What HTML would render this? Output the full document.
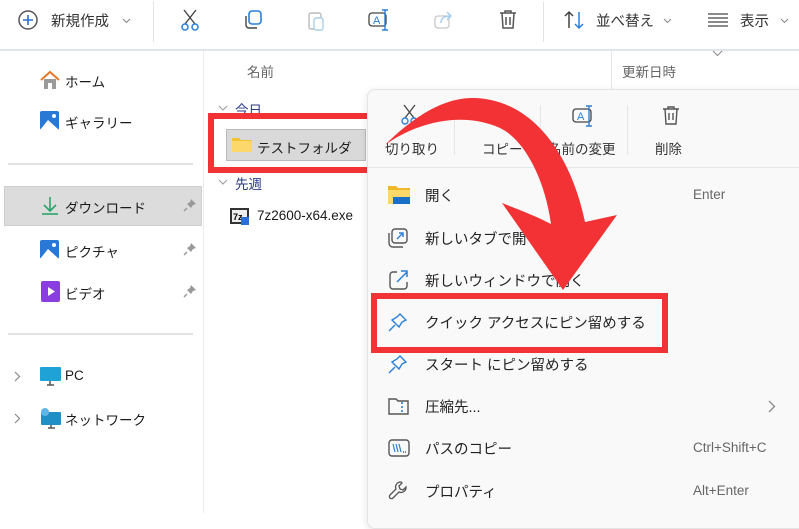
<!DOCTYPE html>
<html><head><meta charset="utf-8"><style>
*{margin:0;padding:0;box-sizing:border-box}
body{width:799px;height:513px;overflow:hidden;background:#fff;font-family:"Liberation Sans","Noto Sans CJK JP",sans-serif;color:#1a1a1a;position:relative}
.a{position:absolute;white-space:nowrap}
.t{font-size:13.5px}
.m{font-size:14.5px;color:#222}
.s{font-size:13.5px;color:#666}
</style></head><body>
<!-- toolbar -->
<div class="a" style="left:0;top:49px;width:799px;height:2px;background:#dde6ee"></div>
<div class="a" style="left:153px;top:2px;width:1px;height:40px;background:#e3e3e3"></div>
<div class="a" style="left:543px;top:2px;width:1px;height:40px;background:#e3e3e3"></div>
<svg class="a" style="left:17px;top:9px" width="22" height="22"><circle cx="11" cy="11" r="9" fill="none" stroke="#555" stroke-width="1.5"/><path d="M11 6v10M6 11h10" stroke="#2a6fd6" stroke-width="1.6"/></svg>
<div class="a" style="left:51px;top:10px;font-size:14.5px;color:#333">新規作成</div>
<svg class="a" style="left:122px;top:18px" width="9" height="6"><path d="M1 1l3.5 3.5L8 1" fill="none" stroke="#888" stroke-width="1"/></svg>
<svg class="a" style="left:178px;top:8px" width="24" height="24"><path d="M6 2l11 14M18 2L7 16" stroke="#444" stroke-width="1.4" fill="none"/><circle cx="7" cy="19" r="3" fill="none" stroke="#2a7fd6" stroke-width="1.5"/><circle cx="17" cy="19" r="3" fill="none" stroke="#2a7fd6" stroke-width="1.5"/></svg>
<svg class="a" style="left:242px;top:9px" width="22" height="22"><rect x="7" y="2" width="12" height="13" rx="3" fill="none" stroke="#2a7fd6" stroke-width="1.6"/><path d="M4 7v9a3 3 0 0 0 3 3h8" fill="none" stroke="#444" stroke-width="1.4"/></svg>
<svg class="a" style="left:305px;top:9px" width="22" height="24"><rect x="4" y="4" width="12" height="16" rx="2" fill="none" stroke="#bbb" stroke-width="1.4"/><rect x="9" y="9" width="9" height="12" rx="2" fill="#fff" stroke="#a8cdee" stroke-width="1.4"/></svg>
<svg class="a" style="left:367px;top:8px" width="24" height="24"><rect x="2" y="5" width="17" height="13" rx="3" fill="none" stroke="#444" stroke-width="1.3"/><text x="6" y="16" font-size="11" fill="#2a7fd6" font-family="Liberation Sans">A</text><path d="M18 2v20M15 2h6M15 22h6" stroke="#2a7fd6" stroke-width="1.4"/></svg>
<svg class="a" style="left:433px;top:9px" width="22" height="22"><rect x="2" y="7" width="14" height="12" rx="3" fill="none" stroke="#c8c8c8" stroke-width="1.3"/><path d="M8 14c0-5 4-7 9-7M14 3l4 4-4 4" fill="none" stroke="#a8cdee" stroke-width="1.5"/></svg>
<svg class="a" style="left:497px;top:8px" width="22" height="24"><path d="M3 5h16M8 5V3h6v2M5 5l1 15h10l1-15M9 9v8M13 9v8" fill="none" stroke="#555" stroke-width="1.5"/></svg>
<svg class="a" style="left:563px;top:10px" width="24" height="20"><path d="M6 18V2M2 6l4-4 4 4" fill="none" stroke="#444" stroke-width="1.5"/><path d="M16 2v16M12 14l4 4 4-4" fill="none" stroke="#2a7fd6" stroke-width="1.5"/></svg>
<div class="a" style="left:596px;top:10px;font-size:14.5px;color:#333">並べ替え</div>
<svg class="a" style="left:663px;top:18px" width="9" height="6"><path d="M1 1l3.5 3.5L8 1" fill="none" stroke="#888" stroke-width="1"/></svg>
<svg class="a" style="left:707px;top:11px" width="22" height="18"><path d="M1 3h20M1 7h20M1 11h20M1 15h20" stroke="#444" stroke-width="1.3"/></svg>
<div class="a" style="left:740px;top:10px;font-size:14.5px;color:#333">表示</div>
<svg class="a" style="left:780px;top:18px" width="9" height="6"><path d="M1 1l3.5 3.5L8 1" fill="none" stroke="#888" stroke-width="1"/></svg>
<!-- sidebar -->
<div class="a" style="left:203px;top:51px;width:1px;height:462px;background:#ececec"></div>
<svg class="a" style="left:39px;top:70px" width="22" height="20"><path d="M2 10L11 2l9 8" fill="none" stroke="#e8782a" stroke-width="2"/><path d="M5 9v10h12V9" fill="#9a9a9a"/><rect x="9" y="13" width="4" height="6" fill="#fff"/></svg>
<div class="a t" style="left:65px;top:71px">ホーム</div>
<svg class="a" style="left:40px;top:111px" width="20" height="20"><rect x="0" y="0" width="19" height="19" rx="2" fill="#2a78d6"/><path d="M0 19L8 9l11 10z" fill="#fff"/><circle cx="14" cy="5" r="2" fill="#fff"/></svg>
<div class="a t" style="left:65px;top:112px">ギャラリー</div>
<div class="a" style="left:8px;top:163px;width:185px;height:2px;background:#e2e2e2"></div>
<div class="a" style="left:4px;top:186px;width:198px;height:40px;background:#dcdcdc;border:1px solid #cfcfcf"></div>
<svg class="a" style="left:41px;top:196px" width="18" height="20"><path d="M9 1v13M3 9l6 6 6-6" fill="none" stroke="#2aa56a" stroke-width="1.6"/><path d="M1 18h16" stroke="#2aa56a" stroke-width="1.6"/></svg>
<div class="a t" style="left:65px;top:197px">ダウンロード</div>
<svg class="a" style="left:183px;top:198px" width="14" height="14"><path d="M8 1l5 5-3 1-2 3-4-4 3-2z" fill="#999"/><path d="M4 10l-3 3" stroke="#999" stroke-width="1.5"/></svg>
<svg class="a" style="left:40px;top:240px" width="20" height="20"><rect x="0" y="0" width="19" height="19" rx="2" fill="#2a78d6"/><path d="M0 19L8 9l11 10z" fill="#fff"/><circle cx="14" cy="5" r="2" fill="#fff"/></svg>
<div class="a t" style="left:65px;top:241px">ピクチャ</div>
<svg class="a" style="left:183px;top:242px" width="14" height="14"><path d="M8 1l5 5-3 1-2 3-4-4 3-2z" fill="#999"/><path d="M4 10l-3 3" stroke="#999" stroke-width="1.5"/></svg>
<svg class="a" style="left:41px;top:281px" width="19" height="21"><rect x="0" y="0" width="19" height="21" rx="2" fill="#8b3ee0"/><path d="M7 6l7 4.5L7 15z" fill="#fff"/></svg>
<div class="a t" style="left:65px;top:283px">ビデオ</div>
<svg class="a" style="left:183px;top:284px" width="14" height="14"><path d="M8 1l5 5-3 1-2 3-4-4 3-2z" fill="#999"/><path d="M4 10l-3 3" stroke="#999" stroke-width="1.5"/></svg>
<div class="a" style="left:8px;top:333px;width:185px;height:2px;background:#e2e2e2"></div>
<svg class="a" style="left:14px;top:371px" width="7" height="11"><path d="M1 1l4.5 4.5L1 10" fill="none" stroke="#888" stroke-width="1.2"/></svg>
<svg class="a" style="left:40px;top:367px" width="21" height="19"><rect x="0" y="0" width="21" height="14" rx="1" fill="#1fa3d6"/><path d="M7 18h7M10 14v4" stroke="#555" stroke-width="1.5"/></svg>
<div class="a t" style="left:65px;top:368px">PC</div>
<svg class="a" style="left:14px;top:413px" width="7" height="11"><path d="M1 1l4.5 4.5L1 10" fill="none" stroke="#888" stroke-width="1.2"/></svg>
<svg class="a" style="left:39px;top:407px" width="23" height="22"><rect x="2" y="5" width="20" height="13" rx="1" fill="#1f8fc6"/><circle cx="6" cy="5" r="4" fill="#5fb7e6"/><path d="M9 21h7M12 18v3" stroke="#555" stroke-width="1.5"/></svg>
<div class="a t" style="left:65px;top:409px">ネットワーク</div>
<!-- main list -->
<div class="a t" style="left:247px;top:61px;color:#666">名前</div>
<div class="a" style="left:611px;top:51px;width:1px;height:38px;background:#e6e6e6"></div>
<div class="a t" style="left:622px;top:61px;color:#666">更新日時</div>
<svg class="a" style="left:712px;top:50px" width="11" height="7"><path d="M1 1l4.5 4.5L10 1" fill="none" stroke="#888" stroke-width="1"/></svg>
<svg class="a" style="left:218px;top:105px" width="10" height="7"><path d="M1 1l4 4 4-4" fill="none" stroke="#999" stroke-width="1"/></svg>
<div class="a t" style="left:235px;top:99px;color:#2a3a8a">今日</div>
<div class="a" style="left:226px;top:129px;width:140px;height:32px;background:#d9d9d9;border:1px solid #bbb"></div>
<svg class="a" style="left:232px;top:136px" width="20" height="16"><path d="M0 2h7l2 2h11v12H0z" fill="#f1c232"/><rect x="0" y="5" width="20" height="11" fill="#fcd86a"/></svg>
<div class="a t" style="left:257px;top:137px">テストフォルダ</div>
<div class="a" style="left:208px;top:113px;width:168px;height:60px;border:6px solid #f23234"></div>
<svg class="a" style="left:218px;top:179px" width="10" height="7"><path d="M1 1l4 4 4-4" fill="none" stroke="#999" stroke-width="1"/></svg>
<div class="a t" style="left:235px;top:173px;color:#2a3a8a">先週</div>
<svg class="a" style="left:230px;top:208px" width="20" height="17"><rect x="0" y="0" width="19" height="16" fill="#333"/><rect x="2" y="2" width="15" height="12" fill="#eee"/><text x="3" y="12" font-size="9" fill="#000" font-family="Liberation Sans" font-weight="bold">7z</text><rect x="11" y="9" width="8" height="8" fill="#2a6fd6"/></svg>
<div class="a t" style="left:257px;top:208px">7z2600-x64.exe</div>
<!-- context menu -->
<div class="a" style="left:367px;top:89px;width:450px;height:440px;background:#f9f9f9;border:1px solid #e4e4e4;border-radius:8px;box-shadow:0 2px 8px rgba(0,0,0,.1)"></div>
<div class="a" style="left:368px;top:167px;width:440px;height:1px;background:#e6e6e6"></div>
<div class="a" style="left:454px;top:105px;width:1px;height:50px;background:#e6e6e6"></div>
<div class="a" style="left:627px;top:105px;width:1px;height:50px;background:#e6e6e6"></div>
<div class="a" style="left:540px;top:105px;width:1px;height:50px;background:#e6e6e6"></div>
<svg class="a" style="left:399px;top:104px" width="22" height="22"><path d="M5 1l10 13M16 1L6 14" stroke="#444" stroke-width="1.3" fill="none"/><circle cx="6" cy="17" r="3" fill="none" stroke="#2a7fd6" stroke-width="1.4"/><circle cx="15" cy="17" r="3" fill="none" stroke="#2a7fd6" stroke-width="1.4"/></svg>
<div class="a t" style="left:385px;top:138px;color:#333">切り取り</div>
<div class="a t" style="left:482px;top:138px;color:#333">コピー</div>
<svg class="a" style="left:572px;top:105px" width="24" height="22"><rect x="1" y="4" width="18" height="13" rx="3" fill="none" stroke="#444" stroke-width="1.3"/><text x="5" y="15" font-size="11" fill="#2a7fd6" font-family="Liberation Sans">A</text><path d="M17 1v20M14 1h6M14 21h6" stroke="#2a7fd6" stroke-width="1.4"/></svg>
<div class="a t" style="left:548px;top:138px;color:#333">名前の変更</div>
<svg class="a" style="left:661px;top:105px" width="22" height="22"><path d="M2 4h16M7 4V2h6v2M4 4l1 15h10l1-15M8 8v7M12 8v7" fill="none" stroke="#555" stroke-width="1.4"/></svg>
<div class="a t" style="left:655px;top:138px;color:#333">削除</div>
<svg class="a" style="left:388px;top:184px" width="22" height="20"><path d="M0 2h8l2 2h12v16H0z" fill="#f1b72a"/><rect x="0" y="6" width="22" height="14" fill="#fcd86a"/><rect x="5" y="13" width="17" height="7" fill="#1a6fc6"/></svg>
<div class="a m" style="left:425px;top:185px">開く</div><div class="a s" style="left:693px;top:187px">Enter</div>
<svg class="a" style="left:388px;top:228px" width="20" height="20"><rect x="4" y="1" width="15" height="14" rx="3" fill="none" stroke="#555" stroke-width="1.4"/><path d="M1 5v10a4 4 0 0 0 4 4h10" fill="none" stroke="#555" stroke-width="1.4"/><path d="M9 11l6-6M11 5h4v4" fill="none" stroke="#2a7fd6" stroke-width="1.4"/></svg>
<div class="a m" style="left:425px;top:228px">新しいタブで開く</div>
<svg class="a" style="left:389px;top:270px" width="20" height="20"><path d="M8 2H4a3 3 0 0 0-3 3v11a3 3 0 0 0 3 3h11a3 3 0 0 0 3-3v-4" fill="none" stroke="#555" stroke-width="1.4"/><path d="M8 12L18 2M12 1h6v6" fill="none" stroke="#2a7fd6" stroke-width="1.5"/></svg>
<div class="a m" style="left:425px;top:270px">新しいウィンドウで開く</div>
<svg class="a" style="left:388px;top:312px" width="20" height="20"><path d="M12 2l6 6-4 2-3 5-7-7 5-3z" fill="none" stroke="#2a7fd6" stroke-width="1.4"/><path d="M7 13l-6 6" stroke="#2a7fd6" stroke-width="1.4"/></svg>
<div class="a m" style="left:425px;top:312px">クイック アクセスにピン留めする</div>
<div class="a" style="left:371px;top:293px;width:297px;height:60px;border:6px solid #f23234"></div>
<svg class="a" style="left:388px;top:354px" width="20" height="20"><path d="M12 2l6 6-4 2-3 5-7-7 5-3z" fill="none" stroke="#2a7fd6" stroke-width="1.4"/><path d="M7 13l-6 6" stroke="#2a7fd6" stroke-width="1.4"/></svg>
<div class="a m" style="left:425px;top:354px">スタート にピン留めする</div>
<svg class="a" style="left:388px;top:396px" width="22" height="20"><path d="M1 3h7l2 2h10v13H1z" fill="none" stroke="#555" stroke-width="1.4"/><path d="M14 6v10" stroke="#2a7fd6" stroke-width="1.6" stroke-dasharray="2 2"/></svg>
<div class="a m" style="left:425px;top:396px">圧縮先...</div>
<svg class="a" style="left:768px;top:400px" width="8" height="13"><path d="M1 1l5.5 5.5L1 12" fill="none" stroke="#888" stroke-width="1.3"/></svg>
<svg class="a" style="left:388px;top:439px" width="22" height="18"><rect x="1" y="1" width="20" height="16" rx="3" fill="none" stroke="#555" stroke-width="1.4"/><path d="M5 5l2 8M8 5l2 8M11 5l2 8" stroke="#2a7fd6" stroke-width="1.2"/><path d="M15 13h1M17 13h1" stroke="#555" stroke-width="1.4"/></svg>
<div class="a m" style="left:425px;top:438px">パスのコピー</div><div class="a s" style="left:693px;top:440px">Ctrl+Shift+C</div>
<svg class="a" style="left:388px;top:480px" width="20" height="20"><path d="M13 2a5 5 0 0 0-5 7L2 15a2 2 0 0 0 3 3l6-6a5 5 0 0 0 7-5l-3 3-3-1-1-3 3-3z" fill="none" stroke="#555" stroke-width="1.3"/></svg>
<div class="a m" style="left:425px;top:481px">プロパティ</div><div class="a s" style="left:693px;top:483px">Alt+Enter</div>
<!-- arrow -->
<svg class="a" style="left:0;top:0" width="799" height="513"><path d="M385,145 C420,110 450,97 475,98 C530,100 570,150 585,222 L617,215 L563,290 L502,203 C520,210 538,217 551,224 C545,180 525,140 500,128 C465,112 420,120 385,145 Z" fill="#f23234"/></svg>
</body></html>
